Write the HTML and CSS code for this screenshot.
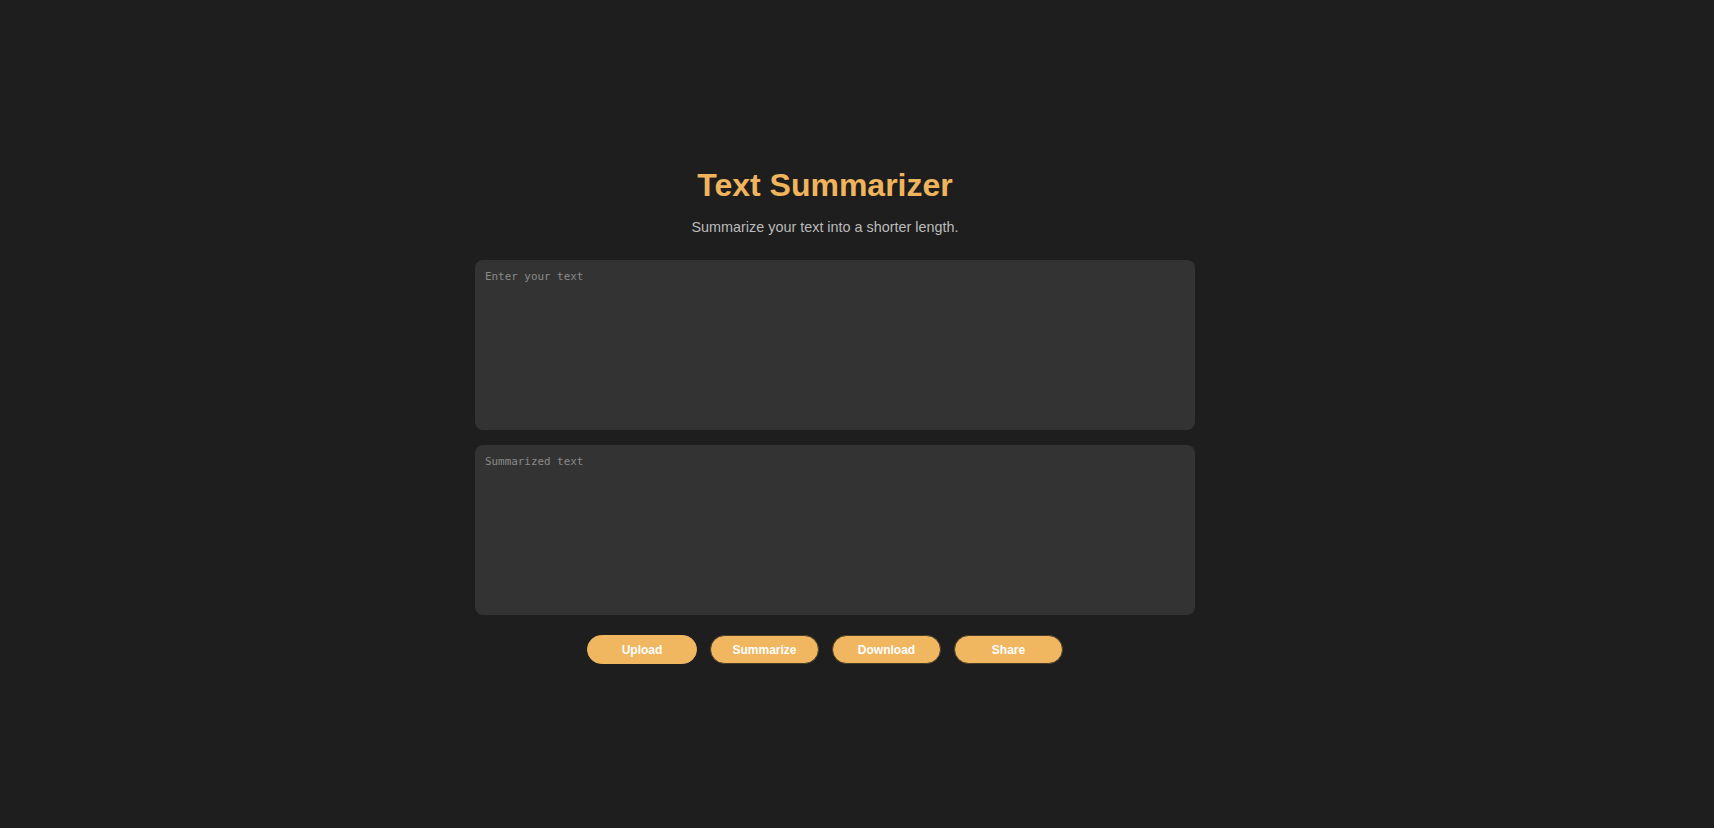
FILE: index.html
```html
<!DOCTYPE html>
<html lang="en">
<head>
<meta charset="utf-8">
<title>Text Summarizer</title>
<link rel="stylesheet" href="styles.css">
</head>
<body>
<main class="page">
  <div class="app">
    <h1 class="title">Text Summarizer</h1>
    <p class="subtitle">Summarize your text into a shorter length.</p>
    <textarea class="box" placeholder="Enter your text"></textarea>
    <textarea class="box box-out" placeholder="Summarized text" readonly></textarea>
    <div class="actions">
      <label class="btn btn-upload">Upload</label>
      <button class="btn">Summarize</button>
      <button class="btn">Download</button>
      <button class="btn">Share</button>
    </div>
  </div>
</main>
</body>
</html>
```
FILE: styles.css
```css
html, body {
  margin: 0;
  padding: 0;
  background: #1e1e1e;
}
.page {
  min-height: 100vh;
  display: flex;
  align-items: center;
  justify-content: center;
  padding-right: 64px;
  padding-top: 3px;
  box-sizing: border-box;
  font-family: "Liberation Sans", Arial, sans-serif;
}
.app {
  width: 700px;
  display: flex;
  flex-direction: column;
  align-items: center;
}
.title {
  margin: 0 0 15px;
  font-size: 32px;
  font-weight: bold;
  color: #f0b45c;
  line-height: normal;
}
.subtitle {
  margin: 0 0 25px;
  font-size: 14.4px;
  color: #bbbbbb;
}
.box {
  align-self: flex-start;
  display: block;
  width: 700px;
  height: 150px;
  padding: 10px;
  margin: 0;
  border: none;
  border-radius: 8px;
  background: #333333;
  color: #dddddd;
  font-family: "DejaVu Sans Mono", monospace;
  font-size: 10.9px;
  resize: none;
  outline: none;
}
.box::placeholder {
  color: #8a8a8a;
}
.box-out {
  margin-top: 15px;
}
.actions {
  margin-top: 20px;
  display: flex;
  gap: 13px;
}
.btn {
  box-sizing: border-box;
  width: 109px;
  height: 29px;
  border: 1px solid #4a3d28;
  border-radius: 15px;
  background: #f0b660;
  color: #ffffff;
  font-family: "Liberation Sans", Arial, sans-serif;
  font-size: 12px;
  font-weight: bold;
  display: flex;
  align-items: center;
  justify-content: center;
  cursor: pointer;
}
.btn-upload {
  width: 110px;
  border-color: #f0b660;
}
```
